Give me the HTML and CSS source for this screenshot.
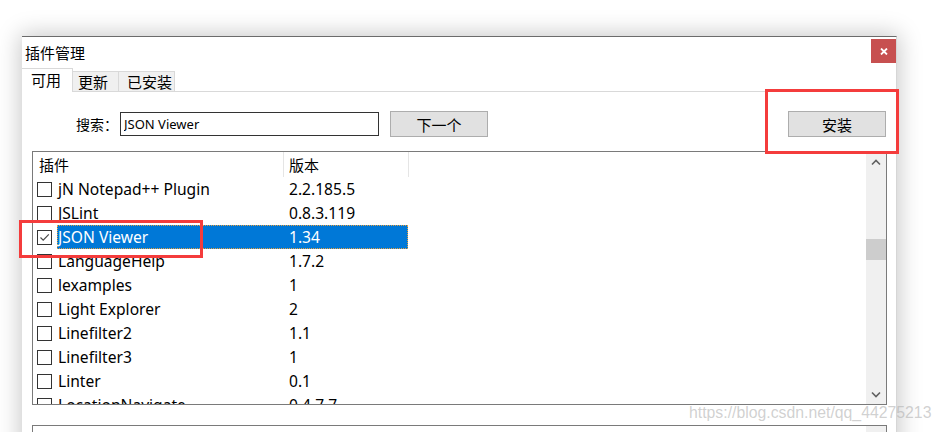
FILE: index.html
```html
<!DOCTYPE html>
<html lang="zh-CN">
<head>
  <meta charset="UTF-8">
  <title>插件管理</title>
  <link rel="stylesheet" href="styles.css">
</head>
<body>
  <div class="window">
    <div class="titlebar">
      <span class="title">插件管理</span>
      <span class="close">
        <svg width="8" height="7" viewBox="0 0 8 7"><path d="M1 0.5 L7 6.5 M7 0.5 L1 6.5" stroke="#fff" stroke-width="1.8"/></svg>
      </span>
    </div>

    <div class="tabs">
      <div class="tab tab-active">可用</div>
      <div class="tab tab-update">更新</div>
      <div class="tab tab-installed">已安装</div>
    </div>

    <div class="content">
      <div class="search-row">
        <span class="search-label">搜索：</span>
        <input class="search-input" value="JSON Viewer" readonly>
        <button class="btn btn-next">下一个</button>
        <button class="btn btn-install">安装</button>
      </div>

      <div class="list">
        <div class="list-body">
          <div class="list-head">
            <div class="head-cell head-name">插件</div>
            <div class="head-cell head-ver">版本</div>
          </div>

          <div class="row">
            <div class="cell-check"><span class="checkbox"></span></div>
            <div class="row-main"><span class="cell-name">jN Notepad++ Plugin</span><span class="cell-ver">2.2.185.5</span></div>
          </div>
          <div class="row">
            <div class="cell-check"><span class="checkbox"></span></div>
            <div class="row-main"><span class="cell-name">JSLint</span><span class="cell-ver">0.8.3.119</span></div>
          </div>
          <div class="row row-selected">
            <div class="cell-check">
              <span class="checkbox">
                <svg width="13" height="13" viewBox="0 0 13 13"><path d="M2.5 6.5 L5.2 9.2 L10.8 3.4" fill="none" stroke="#4a4a4a" stroke-width="1.2"/></svg>
              </span>
            </div>
            <div class="row-main"><span class="cell-name">JSON Viewer</span><span class="cell-ver">1.34</span></div>
          </div>
          <div class="row">
            <div class="cell-check"><span class="checkbox"></span></div>
            <div class="row-main"><span class="cell-name">LanguageHelp</span><span class="cell-ver">1.7.2</span></div>
          </div>
          <div class="row">
            <div class="cell-check"><span class="checkbox"></span></div>
            <div class="row-main"><span class="cell-name">lexamples</span><span class="cell-ver">1</span></div>
          </div>
          <div class="row">
            <div class="cell-check"><span class="checkbox"></span></div>
            <div class="row-main"><span class="cell-name">Light Explorer</span><span class="cell-ver">2</span></div>
          </div>
          <div class="row">
            <div class="cell-check"><span class="checkbox"></span></div>
            <div class="row-main"><span class="cell-name">Linefilter2</span><span class="cell-ver">1.1</span></div>
          </div>
          <div class="row">
            <div class="cell-check"><span class="checkbox"></span></div>
            <div class="row-main"><span class="cell-name">Linefilter3</span><span class="cell-ver">1</span></div>
          </div>
          <div class="row">
            <div class="cell-check"><span class="checkbox"></span></div>
            <div class="row-main"><span class="cell-name">Linter</span><span class="cell-ver">0.1</span></div>
          </div>
          <div class="row">
            <div class="cell-check"><span class="checkbox"></span></div>
            <div class="row-main"><span class="cell-name">LocationNavigate</span><span class="cell-ver">0.4.7.7</span></div>
          </div>
        </div>

        <div class="scrollbar">
          <div class="sb-btn">
            <svg width="10" height="7" viewBox="0 0 10 7"><path d="M1 5.5 L5 1.5 L9 5.5" fill="none" stroke="#606060" stroke-width="1.6"/></svg>
          </div>
          <div class="sb-track"><div class="sb-thumb"></div></div>
          <div class="sb-btn">
            <svg width="10" height="7" viewBox="0 0 10 7"><path d="M1 1.5 L5 5.5 L9 1.5" fill="none" stroke="#606060" stroke-width="1.6"/></svg>
          </div>
        </div>
      </div>

      <div class="desc">
        <div class="desc-text">Display a Json string in a Treeview. It also checks the syntax.</div>
        <div class="desc-scroll"></div>
      </div>
    </div>
  </div>

  <div class="mark mark-install"></div>
  <div class="mark mark-check"></div>
  <div class="watermark">https://blog.csdn.net/qq_44275213</div>
</body>
</html>
```

FILE: styles.css
```css
body {
  margin: 0;
  background: #fff;
  height: 432px;
  overflow: hidden;
  font-family: "Noto Sans", "Noto Sans CJK SC", sans-serif;
  color: #000;
}

.window {
  margin: 36px 0 0 22px;
  width: 875px;
  height: 420px;
  background: #fff;
  border-top: 1px solid #6b6b6b;
  border-right: 1px solid #d6d6d6;
  box-shadow: 0 0 22px 2px rgba(0, 0, 0, 0.22);
  box-sizing: border-box;
}

.titlebar {
  height: 31px;
  display: flex;
  justify-content: space-between;
  align-items: flex-start;
}

.title {
  font-family: "Noto Sans CJK SC", sans-serif;
  font-size: 15px;
  line-height: 31px;
  padding-left: 3px;
}

.close {
  margin-top: 2px;
  width: 25px;
  height: 24px;
  background: #c75050;
  display: flex;
  align-items: center;
  justify-content: center;
}

/* tabs */
.tabs {
  display: flex;
  align-items: flex-end;
  height: 23px;
  border-bottom: 1px solid #d9d9d9;
}

.tab {
  font-family: "Noto Sans CJK SC", sans-serif;
  font-size: 15px;
  box-sizing: border-box;
  height: 21px;
  line-height: 19px;
  background: #f0f0f0;
  border-top: 1px solid #d9d9d9;
  border-right: 1px solid #d9d9d9;
  margin-bottom: -1px;
}

.tab-active {
  width: 51px;
  height: 24px;
  line-height: 22px;
  background: #fff;
  padding-left: 9px;
}

.tab-update {
  width: 46px;
  padding-left: 5px;
  border-bottom: 1px solid #d9d9d9;
}

.tab-installed {
  width: 56px;
  padding-left: 8px;
  border-bottom: 1px solid #d9d9d9;
}

.content {
  padding: 19px 9px 0 10px;
}

/* search row */
.search-row {
  display: flex;
  align-items: center;
  height: 26px;
  padding-left: 44px;
}

.search-label {
  font-family: "Noto Sans CJK SC", sans-serif;
  font-size: 14px;
  width: 44px;
}

.search-input {
  box-sizing: border-box;
  width: 259px;
  height: 24px;
  border: 1px solid #333;
  padding: 0 3px;
  font-family: "Noto Sans", sans-serif;
  font-size: 13px;
  color: #000;
  outline: none;
  margin: 0;
}

.btn {
  box-sizing: border-box;
  width: 98px;
  height: 26px;
  background: #e1e1e1;
  border: 1px solid #adadad;
  font-family: "Noto Sans CJK SC", sans-serif;
  font-size: 15px;
  color: #000;
  padding: 0;
  margin: 0;
}

.btn-next {
  margin-left: 11px;
}

.btn-install {
  margin-left: auto;
  margin-right: 1px;
}

/* plugin list */
.list {
  margin-top: 14px;
  height: 254px;
  box-sizing: border-box;
  border: 1px solid #7a7a7a;
  display: flex;
}

.list-body {
  flex: 1;
  overflow: hidden;
}

.list-head {
  display: flex;
  height: 25px;
}

.head-cell {
  font-family: "Noto Sans CJK SC", sans-serif;
  font-size: 15px;
  line-height: 25px;
  box-sizing: border-box;
  border-right: 1px solid #e5e5e5;
}

.head-name {
  width: 251px;
  padding-left: 6px;
}

.head-ver {
  width: 125px;
  padding-left: 5px;
}

.row {
  display: flex;
  height: 24px;
  font-size: 15.6px;
  line-height: 25px;
}

.cell-check {
  width: 24px;
  display: flex;
  align-items: center;
}

.checkbox {
  box-sizing: border-box;
  width: 15px;
  height: 15px;
  margin-left: 4px;
  border: 1px solid #333;
  background: #fff;
  display: flex;
}

.row-main {
  display: flex;
  box-sizing: border-box;
  width: 351px;
  height: 24px;
}

.cell-name {
  width: 227px;
  padding-left: 1px;
  box-sizing: border-box;
  white-space: nowrap;
}

.cell-ver {
  padding-left: 5px;
}

.row-selected .row-main {
  background: #0078d7;
  color: #fff;
  outline: 1px dotted #e8a040;
  outline-offset: -1px;
}

.scrollbar {
  width: 20px;
  background: #f0f0f0;
  display: flex;
  flex-direction: column;
}

.sb-btn {
  height: 20px;
  display: flex;
  align-items: center;
  justify-content: center;
}

.sb-track {
  flex: 1;
}

.sb-thumb {
  margin-top: 67px;
  height: 21px;
  background: #cdcdcd;
}

/* description box */
.desc {
  margin-top: 20px;
  height: 60px;
  box-sizing: border-box;
  border: 1px solid #7a7a7a;
  display: flex;
}

.desc-text {
  flex: 1;
  font-size: 13px;
  line-height: 16px;
  padding: 4px 0 0 84px;
  color: #000;
}

.desc-scroll {
  width: 20px;
  background: #f0f0f0;
}

/* annotations */
.mark {
  position: absolute;
  border: 3px solid #f43c3c;
  box-sizing: border-box;
}

.mark-install {
  left: 765px;
  top: 89px;
  width: 134px;
  height: 65px;
}

.mark-check {
  left: 19px;
  top: 220px;
  width: 184px;
  height: 38px;
}

.watermark {
  position: absolute;
  left: 689px;
  top: 404px;
  font-family: "Liberation Sans", Arial, sans-serif;
  font-size: 15.8px;
  color: rgba(170, 170, 170, 0.55);
}
```
